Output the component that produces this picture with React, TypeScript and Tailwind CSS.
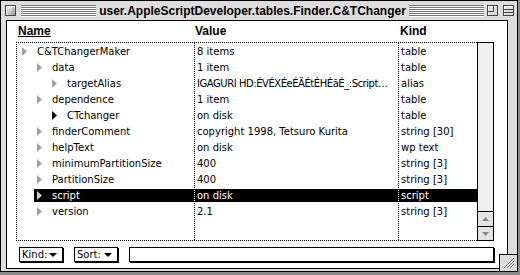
import * as React from "react"

type Row = {
  name: string
  value: string
  kind: string
  level: number
  open?: boolean
  selected?: boolean
  tight?: boolean
}

const ROWS: Row[] = [
  { name: "C&TChangerMaker", value: "8 items", kind: "table", level: 0 },
  { name: "data", value: "1 item", kind: "table", level: 1 },
  { name: "targetAlias", value: "IGAGURI HD:ÉVÉXÉeÉÄÉtÉHÉãÉ_:Script…", kind: "alias", level: 2, tight: true },
  { name: "dependence", value: "1 item", kind: "table", level: 1 },
  { name: "CTchanger", value: "on disk", kind: "table", level: 2, open: true },
  { name: "finderComment", value: "copyright 1998, Tetsuro Kurita", kind: "string [30]", level: 1 },
  { name: "helpText", value: "on disk", kind: "wp text", level: 1 },
  { name: "minimumPartitionSize", value: "400", kind: "string [3]", level: 1 },
  { name: "PartitionSize", value: "400", kind: "string [3]", level: 1 },
  { name: "script", value: "on disk", kind: "script", level: 1, selected: true },
  { name: "version", value: "2.1", kind: "string [3]", level: 1 },
]

const INDENT = ["pl-[2px]", "pl-[17px]", "pl-[32px]"]

const geneva = "font-['DejaVu_Sans',sans-serif] text-[10px]"
const chicago = "font-['Liberation_Sans',Arial,sans-serif] font-bold text-[12px]"

const Stripes = () => (
  <div className="flex flex-1 flex-col">
    {[0, 1, 2, 3, 4, 5].map((i) => (
      <div key={i} className="h-[2px] border-t border-t-[#777] border-b border-b-white" />
    ))}
  </div>
)

const Triangle = ({ color }: { color: string }) => (
  <svg width="5" height="9" viewBox="0 0 5 9" className="shrink-0">
    <path d="M0 0L5 4.5L0 9Z" fill={color} />
  </svg>
)

const Popup = ({ label }: { label: string }) => (
  <div
    className={`flex h-[15px] w-[44px] items-center justify-between border border-black bg-white pl-[2px] pr-[5px] shadow-[1px_1px_0_#000] ${geneva}`}
  >
    <span>{label}</span>
    <svg width="8" height="4" viewBox="0 0 8 4">
      <path d="M0 0H8L4 4Z" fill="#000" />
    </svg>
  </div>
)

const App: React.FC = () => {
  return (
    <div className="h-[275px] w-[520px] bg-[#8a8a8a]">
      <div className="relative flex h-[272px] w-[518px] flex-col border border-black bg-[#dddddd]">
        {/* title bar */}
        <div className="flex h-[19px] shrink-0 items-center pl-[4px] pr-[3px]">
          <div className="h-[11px] w-[11px] border border-[#444] bg-linear-to-br from-white to-[#999] shadow-[inset_1px_1px_0_#fff]" />
          <div className="ml-[5px] flex flex-1 items-center">
            <Stripes />
            <span className={`px-[3px] leading-[14px] whitespace-nowrap text-black ${chicago}`}>
              user.AppleScriptDeveloper.tables.Finder.C&amp;TChanger
            </span>
            <Stripes />
          </div>
          <div className="ml-[3px] h-[11px] w-[11px] border border-[#444] bg-[#ddd] shadow-[inset_1px_1px_0_#fff]">
            <div className="h-[6px] w-[6px] border-r border-b border-[#444]" />
          </div>
          <div className="ml-[5px] flex h-[11px] w-[11px] flex-col justify-center gap-[2px] border border-[#444] bg-[#ddd] shadow-[inset_1px_1px_0_#fff]">
            <div className="h-[1px] bg-[#444]" />
            <div className="h-[1px] bg-[#444]" />
          </div>
        </div>

        {/* body */}
        <div className="flex flex-1 flex-col pb-[2px] pl-[5px] pr-[9px]">
          <div className="flex flex-1 flex-col border border-black bg-white pl-[9px] pr-[13px]">
            {/* column headers */}
            <div className={`flex h-[21px] pt-[3px] leading-[14px] ${chicago}`}>
              <div className="w-[178px] pl-[2px]">
                <span className="underline underline-offset-[1px]">Name</span>
              </div>
              <div className="w-[204px] pl-[1px]">Value</div>
              <div className="pl-[2px]">Kind</div>
            </div>

            {/* table */}
            <div className="flex h-[199px]">
              <div className={`flex flex-1 border-t border-b border-l border-dotted border-black pt-[1px] ${geneva}`}>
                <div className="flex w-[177px] flex-col">
                  {ROWS.map((r) => (
                    <div key={r.name} className={`flex h-[16px] pt-[1px] ${INDENT[r.level]}`}>
                      <div
                        className={`flex h-[13px] flex-1 items-center pl-[3px] ${r.selected ? "bg-black text-white" : "text-black"}`}
                      >
                        <Triangle color={r.selected ? "#cccccc" : r.open ? "#000000" : "#a0a0a0"} />
                        <span className="ml-[10px] whitespace-nowrap">{r.name}</span>
                      </div>
                    </div>
                  ))}
                </div>
                <div className="-mt-[1px] flex w-[204px] flex-col border-l border-dotted border-black pt-[1px]">
                  {ROWS.map((r) => (
                    <div key={r.name} className="flex h-[16px] pt-[1px]">
                      <div
                        className={`flex h-[13px] min-w-0 flex-1 items-center overflow-hidden pl-[2px] whitespace-nowrap ${r.tight ? "tracking-[-0.45px]" : ""} ${r.selected ? "bg-black text-white" : "text-black"}`}
                      >
                        {r.value}
                      </div>
                    </div>
                  ))}
                </div>
                <div className="-mt-[1px] flex flex-1 flex-col border-l border-dotted border-black pt-[1px]">
                  {ROWS.map((r) => (
                    <div key={r.name} className="flex h-[16px] pt-[1px]">
                      <div
                        className={`flex h-[13px] flex-1 items-center pl-[2px] whitespace-nowrap ${r.selected ? "bg-black text-white" : "text-black"}`}
                      >
                        {r.kind}
                      </div>
                    </div>
                  ))}
                </div>
              </div>

              {/* scrollbar */}
              <div className="flex w-[17px] flex-col justify-end border border-black bg-[#eeeeee]">
                <div className="flex h-[15px] items-center justify-center border-t border-black bg-[#e4e4e4]">
                  <svg width="7" height="4" viewBox="0 0 7 4">
                    <path d="M0 4L3.5 0L7 4Z" fill="#888" />
                  </svg>
                </div>
                <div className="flex h-[14px] items-center justify-center border-t border-black bg-[#e4e4e4]">
                  <svg width="7" height="4" viewBox="0 0 7 4">
                    <path d="M0 0H7L3.5 4Z" fill="#888" />
                  </svg>
                </div>
              </div>
            </div>

            {/* bottom controls */}
            <div className="mt-[6px] flex items-start pl-[3px]">
              <Popup label="Kind:" />
              <div className="ml-[11px]">
                <Popup label="Sort:" />
              </div>
              <div className="ml-[11px] h-[15px] flex-1 border border-black bg-white shadow-[1px_1px_0_#000]" />
            </div>
          </div>
        </div>

        {/* grow box */}
        <div className="absolute right-0 bottom-0 flex h-[17px] w-[18px] items-center justify-center border-t border-l border-black bg-[#dddddd]">
          <svg width="12" height="12" viewBox="0 0 12 12">
            <path d="M1 11L11 1M4 11L11 4M7 11L11 7" stroke="#666" strokeWidth="1" />
            <path d="M2 11L11 2M5 11L11 5M8 11L11 8" stroke="#fff" strokeWidth="1" />
          </svg>
        </div>
      </div>
    </div>
  )
}

export default App
